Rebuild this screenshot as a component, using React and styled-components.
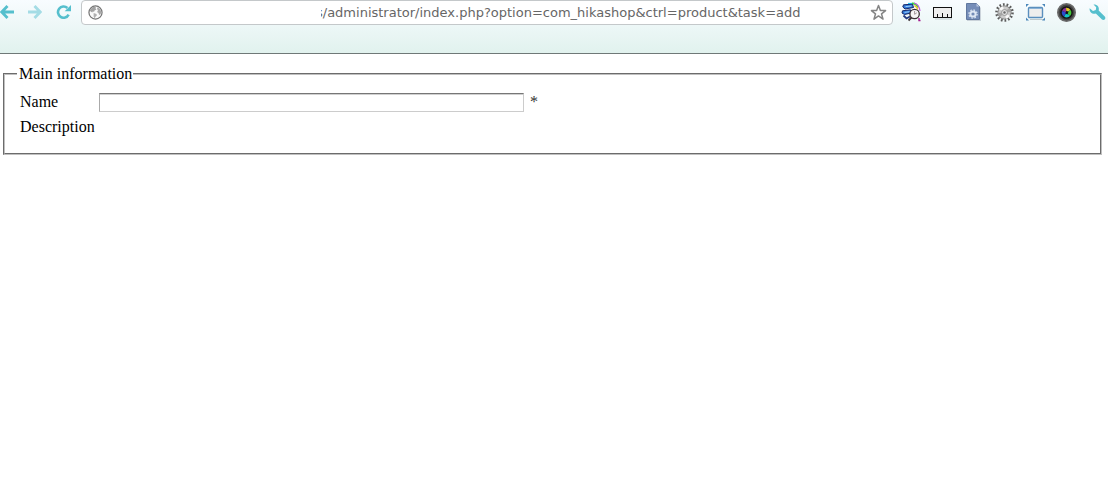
import React, { useState } from 'react';
import styled, { createGlobalStyle } from 'styled-components';

const GlobalStyle = createGlobalStyle`
  body {
    margin: 0;
    background: #ffffff;
    color: #000000;
    font-family: "Liberation Serif", "Times New Roman", serif;
    font-size: 16px;
  }
`;

const BackIcon = () => (
  <svg width="14" height="14" viewBox="0 0 14 14" fill="none" stroke="currentColor" strokeWidth="2.8">
    <path d="M1.5 7H14M7.5 1L1.8 7L7.5 13" />
  </svg>
);

const ForwardIcon = () => (
  <svg width="14" height="14" viewBox="0 0 14 14" fill="none" stroke="currentColor" strokeWidth="2.8">
    <path d="M0 7H12.5M6.5 1L12.2 7L6.5 13" />
  </svg>
);

const ReloadIcon = () => (
  <svg width="16" height="14" viewBox="0 0 16 14">
    <path d="M12.6 9.6A5.6 5.6 0 1 1 11.4 3" fill="none" stroke="currentColor" strokeWidth="2.6" />
    <path d="M15 0V6.3H8.7Z" fill="currentColor" />
  </svg>
);

const GlobeIcon = () => (
  <svg width="15" height="15" viewBox="0 0 16 16">
    <circle cx="8" cy="8" r="7" fill="#fafafa" stroke="#747474" strokeWidth="1.3" />
    <path d="M3 4L5.5 2L8.5 1.8L8 3.5L9 4.8L7 5.8L6.5 7.2L5 7L4.5 8L2.8 7L2 6Z" fill="#a2a2a2" />
    <path d="M6 8.6L9 9.5L9.5 11L8 12.5L7.2 14.2L6 12.5Z" fill="#b0b0b0" />
    <path d="M10.2 2.4L13.2 4.6L14.2 8L13 10.5L11.8 10.5L11.2 8.6L9.7 7.5L10.6 5.8L9.6 4Z" fill="#a8a8a8" />
  </svg>
);

const StarIcon = () => (
  <svg width="17" height="17" viewBox="0 0 18 18">
    <path
      d="M9 1.5L11 7H16.5L12.2 10.5L13.8 16L9 12.7L4.2 16L5.8 10.5L1.5 7H7Z"
      fill="#ffffff"
      stroke="#858585"
      strokeWidth="1.6"
      strokeLinejoin="round"
    />
  </svg>
);

const SearchPagesIcon = () => (
  <svg width="20" height="20" viewBox="0 0 20 20">
    <path d="M7 1.6H11.5" stroke="#24c8ff" strokeWidth="1.4" />
    <path d="M11 1.6C14 1.4 16 3 17 5.5" fill="none" stroke="#38dd3a" strokeWidth="2" />
    <path d="M13 1C16.5 1.8 18.5 4.5 19 9" fill="none" stroke="#c05be0" strokeWidth="1.2" />
    <path d="M13.5 3.5C15.5 4.5 16.3 5.5 16.8 7.5" fill="none" stroke="#f0c030" strokeWidth="1.4" />
    <path d="M2.5 2.8L11.5 2.2L12.5 5.5L4 7L1.8 5Z" fill="#2f78d8" stroke="#142769" />
    <path d="M1.5 8.8L9.5 7.8L10 11L3.5 12.5L1 11Z" fill="#2f78d8" stroke="#142769" />
    <path d="M4.5 4.6L10.5 4M3.5 10.4L8.5 9.7" stroke="#9ed2ff" />
    <path d="M2.5 13.5L5.5 16.5L9 14.5" fill="none" stroke="#263b80" strokeWidth="1.8" />
    <path d="M7.5 18.5L10.5 15.5" stroke="#3c3034" strokeWidth="1.8" />
    <circle cx="13.6" cy="12" r="4.7" fill="#f6f4f5" stroke="#3c3034" strokeWidth="1.3" />
    <path d="M13.6 9V12.3L15.8 10.8" fill="none" stroke="#a5989c" />
    <path d="M18 16V18.5H19.5" fill="none" stroke="#a31b8e" strokeWidth="1.4" />
  </svg>
);

const RulerIcon = () => (
  <svg width="20" height="20" viewBox="0 0 20 20">
    <path d="M3 17H20V8" fill="none" stroke="#c3cdd0" />
    <rect x="1.5" y="5.5" width="18" height="10" fill="#eeeeee" stroke="#111111" />
    <path d="M5.5 15V12M10.5 15V11M15.5 15V12" stroke="#111111" />
  </svg>
);

const PageGearIcon = () => (
  <svg width="20" height="20" viewBox="0 0 20 20">
    <path d="M4 2H14L18 6V19H4Z" fill="#a5aebb" opacity="0.5" />
    <path d="M3.5 1.5H13.5L16.5 4.5V17.5H3.5Z" fill="#748db8" stroke="#60789f" />
    <path d="M13.5 1.5V4.5H16.5Z" fill="#b9c8df" />
    <circle cx="10" cy="12" r="2.6" fill="none" stroke="#dde7f4" strokeWidth="2" />
    <circle cx="10" cy="12" r="4.1" fill="none" stroke="#dde7f4" strokeWidth="1.2" strokeDasharray="1.6 1.62" />
  </svg>
);

const GearIcon = () => (
  <svg width="20" height="20" viewBox="0 0 20 20">
    <circle cx="10.5" cy="10.5" r="8" fill="none" stroke="#5c5c5c" strokeWidth="2.6" strokeDasharray="1.7 1.89" />
    <circle cx="10.5" cy="10.5" r="6.6" fill="#cccccc" stroke="#858585" />
    <path d="M10.5 10.5L5 7A6.5 6.5 0 0 1 9 4.2ZM10.5 10.5L16 14A6.5 6.5 0 0 1 12 16.8Z" fill="#f7f7f7" />
    <path d="M10.5 10.5L15 6A6.5 6.5 0 0 1 17 10ZM10.5 10.5L6 15A6.5 6.5 0 0 1 4 11Z" fill="#a6a6a6" />
    <circle cx="10.5" cy="10.5" r="3" fill="#dddddd" stroke="#999999" />
    <circle cx="10.5" cy="10.5" r="1.2" fill="#6c6c6c" />
  </svg>
);

const CaptureIcon = () => (
  <svg width="20" height="20" viewBox="0 0 20 20">
    <path d="M5 17.5H19" stroke="#bfc9cc" />
    <rect x="3.5" y="5.5" width="14" height="10" rx="1" fill="#eeeeee" stroke="#5a8fbe" strokeWidth="1.4" />
    <path d="M4 6.5H17" stroke="#8ab2d6" />
    <path d="M1 5V2H4ZM17 2H20V5ZM20 15.5V18.5H17ZM4 18.5H1V15.5Z" fill="#4b87ba" />
  </svg>
);

const LensIcon = () => (
  <svg width="20" height="20" viewBox="0 0 20 20">
    <circle cx="10.5" cy="10.5" r="8.7" fill="#454545" stroke="#6b6b6b" strokeWidth="1.6" />
    <circle cx="10.5" cy="10.5" r="6.3" fill="#151515" />
    <path d="M10.5 10.5L6 9A5 5 0 0 1 10 5.7Z" fill="#8c2f9a" />
    <path d="M10.5 10.5L10 5.7A5 5 0 0 1 14.5 8Z" fill="#e4c62b" />
    <path d="M10.5 10.5L14.5 8A5 5 0 0 1 14 14Z" fill="#45c839" />
    <path d="M10.5 10.5L14 14A5 5 0 0 1 8 14.5Z" fill="#16c7c5" />
    <path d="M10.5 10.5L8 14.5A5 5 0 0 1 6 9Z" fill="#2a4ad0" />
    <path d="M10 9L12.5 9.5L11.5 12.5L9.5 11.5Z" fill="#101018" />
  </svg>
);

const WrenchIcon = () => (
  <svg width="20" height="20" viewBox="0 0 20 20">
    <path
      d="M6.5 2.5C10.5 2.4 12.6 5.1 11.7 8.5L18 14.7C19.3 17 16.8 19 15 17.6L8.8 11.6C5.2 12.5 2.2 9.8 2.6 6.2L6 9L8.8 8L9.2 5.2Z"
      fill="currentColor"
    />
  </svg>
);

const extensions = [
  { name: 'Search pages', Icon: SearchPagesIcon },
  { name: 'Ruler', Icon: RulerIcon },
  { name: 'Page settings', Icon: PageGearIcon },
  { name: 'Options', Icon: GearIcon },
  { name: 'Capture window', Icon: CaptureIcon },
  { name: 'Color picker', Icon: LensIcon },
  { name: 'Menu', Icon: WrenchIcon }
];

const App = () => {
  const [url, setUrl] = useState('s/administrator/index.php?option=com_hikashop&ctrl=product&task=add');
  const [name, setName] = useState('');

  return (
    <>
      <GlobalStyle />
      <BrowserBar>
        <Navigation>
          <IconButton type="button" aria-label="Back"><BackIcon /></IconButton>
          <IconButton type="button" aria-label="Forward" $faded><ForwardIcon /></IconButton>
          <IconButton type="button" aria-label="Reload"><ReloadIcon /></IconButton>
        </Navigation>
        <AddressBar>
          <GlobeIcon />
          <AddressInput
            type="text"
            aria-label="Address"
            spellCheck="false"
            value={url}
            onChange={(e) => setUrl(e.target.value)}
          />
          <IconButton type="button" aria-label="Bookmark"><StarIcon /></IconButton>
        </AddressBar>
        <Extensions>
          {extensions.map(({ name: label, Icon }) => (
            <IconButton key={label} type="button" aria-label={label}><Icon /></IconButton>
          ))}
        </Extensions>
      </BrowserBar>
      <ProductForm onSubmit={(e) => e.preventDefault()}>
        <Fieldset>
          <Legend>Main information</Legend>
          <Fields>
            <label htmlFor="name">Name</label>
            <FieldValue>
              <NameInput
                type="text"
                id="name"
                name="name"
                value={name}
                onChange={(e) => setName(e.target.value)}
              />
              <Required>*</Required>
            </FieldValue>
            <span>Description</span>
          </Fields>
        </Fieldset>
      </ProductForm>
    </>
  );
};

const BrowserBar = styled.header`
  display: flex;
  align-items: flex-start;
  gap: 8px;
  padding: 0 1px 28px 0;
  border-bottom: 1px solid #6f7877;
  background: linear-gradient(#f8fcff, #e1f2ee);
`;

const Navigation = styled.nav`
  display: flex;
  align-items: center;
  gap: 14px;
  height: 24px;
  margin-right: 1px;
`;

const IconButton = styled.button`
  display: flex;
  flex: none;
  padding: 0;
  border: none;
  background: none;
  color: ${(props) => (props.$faded ? '#a4dce5' : '#55bfcd')};
  cursor: pointer;
`;

const AddressBar = styled.div`
  display: flex;
  flex: 1;
  align-items: center;
  box-sizing: border-box;
  height: 25px;
  padding: 0 5px 0 6px;
  border: 1px solid #c4c8ca;
  border-radius: 4px;
  background: #ffffff;
`;

const AddressInput = styled.input`
  flex: 1;
  min-width: 0;
  margin-left: 218px;
  padding: 0;
  border: none;
  outline: none;
  background: none;
  color: #666666;
  font-family: "DejaVu Sans", "Lucida Grande", sans-serif;
  font-size: 13px;
  text-indent: -5px;
`;

const Extensions = styled.div`
  display: flex;
  align-items: center;
  gap: 11px;
  height: 24px;
`;

const ProductForm = styled.form`
  padding: 11px 6px 0 3px;
`;

const Fieldset = styled.fieldset`
  min-width: 0;
  margin: 0;
  padding: 8px 12px 15px;
  border: 2px groove #c0c0c0;
`;

const Legend = styled.legend`
  padding: 0 1px 0 2px;
`;

const Fields = styled.div`
  display: grid;
  grid-template-columns: 73px 1fr;
  gap: 3px 6px;
  padding-left: 3px;
  line-height: 22px;
`;

const FieldValue = styled.div`
  display: flex;
  align-items: center;
  gap: 6px;
`;

const NameInput = styled.input`
  box-sizing: border-box;
  width: 425px;
  max-width: 90%;
  height: 19px;
  padding: 1px;
  border: 1px solid;
  border-color: #777777 #cccccc #cccccc #aaaaaa;
  box-shadow: inset 0 1px #d0d0d0;
  background: #ffffff;
  font-size: 13px;
`;

const Required = styled.span`
  color: #333333;
`;

export default App;
